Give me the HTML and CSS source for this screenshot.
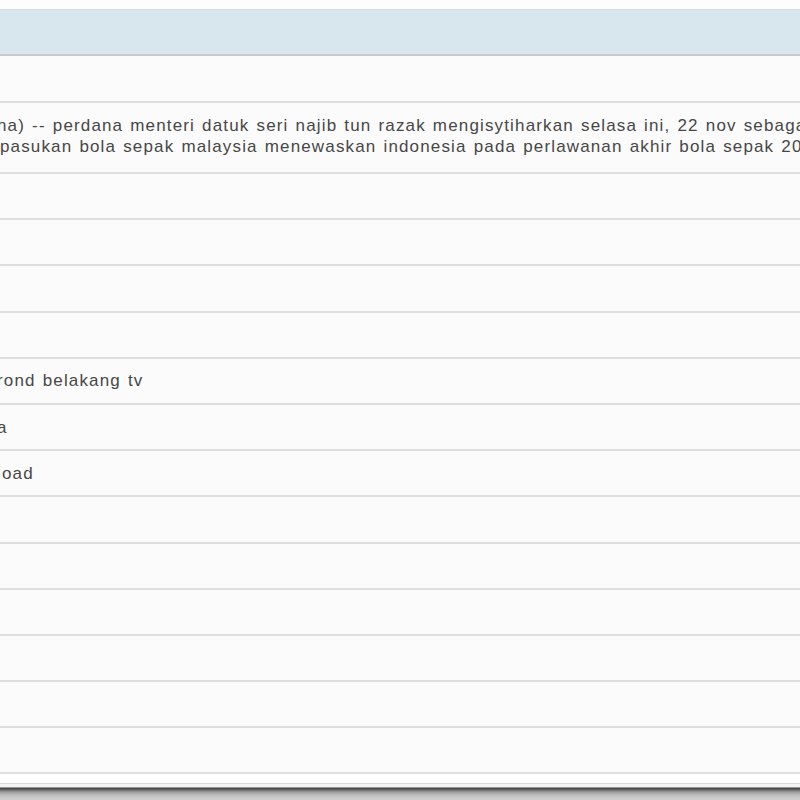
FILE: index.html
```html
<html lang="en">
<head>
  <meta charset="UTF-8">
  <title>Senarai</title>
  <link rel="stylesheet" href="styles.css">
</head>
<body>
  <div class="shot">
    <div class="gap"></div>
    <div class="head"></div>
    <div class="row r0"></div>
    <div class="row r1">
      <div class="txt">na) -- perdana menteri datuk seri najib tun razak mengisytiharkan selasa ini, 22 nov sebagai</div>
      <div class="txt t2">pasukan bola sepak malaysia menewaskan indonesia pada perlawanan akhir bola sepak 2011</div>
    </div>
    <div class="row"></div>
    <div class="row"></div>
    <div class="row"></div>
    <div class="row"></div>
    <div class="row"><div class="txt">rond belakang tv</div></div>
    <div class="row"><div class="txt">a</div></div>
    <div class="row"><div class="txt">load</div></div>
    <div class="row"></div>
    <div class="row"></div>
    <div class="row"></div>
    <div class="row"></div>
    <div class="row"></div>
    <div class="row"></div>
    <div class="foot"></div>
    <div class="shadow"></div>
  </div>
</body>
</html>
```

FILE: styles.css
```css
body {
  margin: 0;
  background: #ffffff;
  font-family: "Liberation Sans", Arial, sans-serif;
}
.shot {
  width: 800px;
  height: 800px;
  overflow: hidden;
  display: flex;
  flex-direction: column;
  background: #fbfbfb;
}
.gap { height: 9px; flex: none; background: #fdfdfd; }
.head {
  height: 47px;
  flex: none;
  box-sizing: border-box;
  background: #d8e7ee;
  border-top: 1px solid #d3dde2;
  border-bottom: 2px solid #c7cbcd;
}
.row {
  height: 46.2px;
  flex: none;
  box-sizing: border-box;
  border-bottom: 2px solid #dedede;
  display: flex;
  flex-direction: column;
  justify-content: center;
  overflow: hidden;
}
.r0 { height: 47px; }
.r1 { height: 71px; padding-bottom: 3px; }
.txt {
  font-size: 17px;
  line-height: 21px;
  letter-spacing: 1.15px;
  word-spacing: 1.2px;
  color: #474747;
  white-space: nowrap;
  margin-left: -3px;
}
.t2 { margin-left: 0; }
.foot {
  height: 9px;
  flex: none;
  background: #ffffff;
  border-bottom: 1px solid #d9d9d9;
}
.shadow {
  flex: 1;
  background: linear-gradient(#f4f4f4 0, #f4f4f4 3px, #3c3c3c 4px, #6a6a6a 6px, #9c9c9c 8px, #bdbdbd 11px, #d2d2d2 100%);
}
```
